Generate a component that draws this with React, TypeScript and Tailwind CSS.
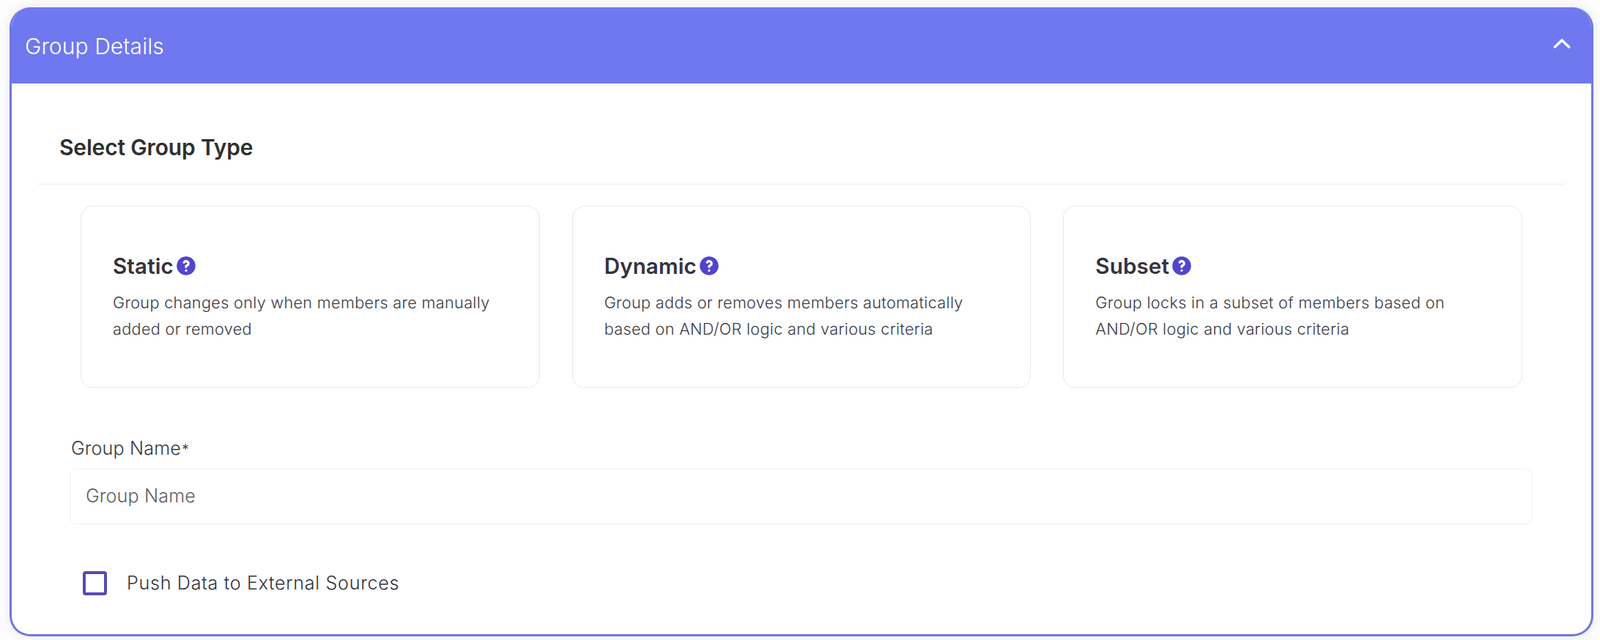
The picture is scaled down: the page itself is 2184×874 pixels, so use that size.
const FONT = "font-['Inter',sans-serif]";

function HelpIcon() {
  return (
    <svg viewBox="0 0 20 20" fill="#5145cd" className="w-[32px] h-[32px] shrink-0 ml-[1px]">
      <path
        fillRule="evenodd"
        clipRule="evenodd"
        d="M18 10a8 8 0 11-16 0 8 8 0 0116 0zm-8-3a1 1 0 00-.867.5 1 1 0 11-1.731-1A3 3 0 0113 8a3.001 3.001 0 01-2 2.83V11a1 1 0 11-2 0v-1a1 1 0 011-1 1 1 0 100-2zm0 8a1 1 0 100-2 1 1 0 000 2z"
      />
    </svg>
  );
}

const types = [
  { title: "Static", lines: ["Group changes only when members are manually", "added or removed"] },
  { title: "Dynamic", lines: ["Group adds or removes members automatically", "based on AND/OR logic and various criteria"] },
  { title: "Subset", lines: ["Group locks in a subset of members based on", "AND/OR logic and various criteria"] },
];

function TypeCard({ title, lines }: { title: string; lines: string[] }) {
  return (
    <div className="flex-1 h-[249px] border border-[#e9e9ee] rounded-[17px] bg-white pl-[43px] pt-[63px]">
      <div className="flex items-center h-[36px]">
        <span className="text-[29.6px] leading-[36px] font-semibold text-[#33333f] tracking-[0.1px]">{title}</span>
        <HelpIcon />
      </div>
      <p className="mt-[15px] text-[21.7px] leading-[35.8px] font-light text-[#3c3c48] tracking-[0.3px]">
        {lines[0]}
        <br />
        {lines[1]}
      </p>
    </div>
  );
}

export default function App() {
  return (
    <div className={`${FONT} min-h-[874px] bg-[#fdfdfe] pt-[10px] pl-[13px] pr-[9px]`}>
      <div className="h-[859px] bg-white border-[3px] border-t-0 border-[#7079dc] rounded-[28px] overflow-hidden shadow-[0_0_14px_rgba(60,60,120,0.12)] flex flex-col">
        <div className="-mx-[3px] h-[104px] shrink-0 bg-[#6f78ee] flex items-center justify-between pl-[21px] pr-[31px]">
          <span className="text-[30px] font-light text-white tracking-[0.1px] mt-[2px]">Group Details</span>
          <svg viewBox="0 0 24 14" className="w-[24px] h-[14px] -mt-[6px]" fill="none" stroke="white" strokeWidth="3.6" strokeLinecap="round" strokeLinejoin="round">
            <path d="M2.5 12 L12 3 L21.5 12" />
          </svg>
        </div>

        <div className="flex flex-col flex-1">
          <div className="mx-[36px] h-[138px] border-b border-[#ececf1] pl-[29px] pt-[67px]">
            <h2 className="text-[30px] leading-[40px] font-semibold text-[#2f2f2f] tracking-[-0.17px]">Select Group Type</h2>
          </div>

          <div className="flex gap-[44px] pl-[94px] pr-[94px] mt-[29px]">
            {types.map((t) => (
              <TypeCard key={t.title} title={t.title} lines={t.lines} />
            ))}
          </div>

          <div className="pl-[79px] pr-[80px] mt-[65px]">
            <label className="block pl-[2px] text-[25.2px] leading-[34px] text-[#3a3a46] tracking-[0.1px] font-light">
              Group Name<span className="text-[20px] ml-[1px]">*</span>
            </label>
            <input
              readOnly
              placeholder="Group Name"
              className="mt-[9px] block w-full h-[76px] rounded-[10px] border border-[#f0f0f4] bg-white pl-[21px] pb-[2px] text-[25.2px] tracking-[0.1px] font-light placeholder:text-[#5f5f66] outline-none"
            />
          </div>

          <div className="flex items-center pl-[97px] mt-[62px]">
            <span className="w-[33px] h-[33px] rounded-[4px] border-[4px] border-[#544cb0] bg-white" />
            <span className="ml-[27px] text-[25.2px] font-light text-[#33333f] tracking-[0.66px]">Push Data to External Sources</span>
          </div>
        </div>
      </div>
    </div>
  );
}
